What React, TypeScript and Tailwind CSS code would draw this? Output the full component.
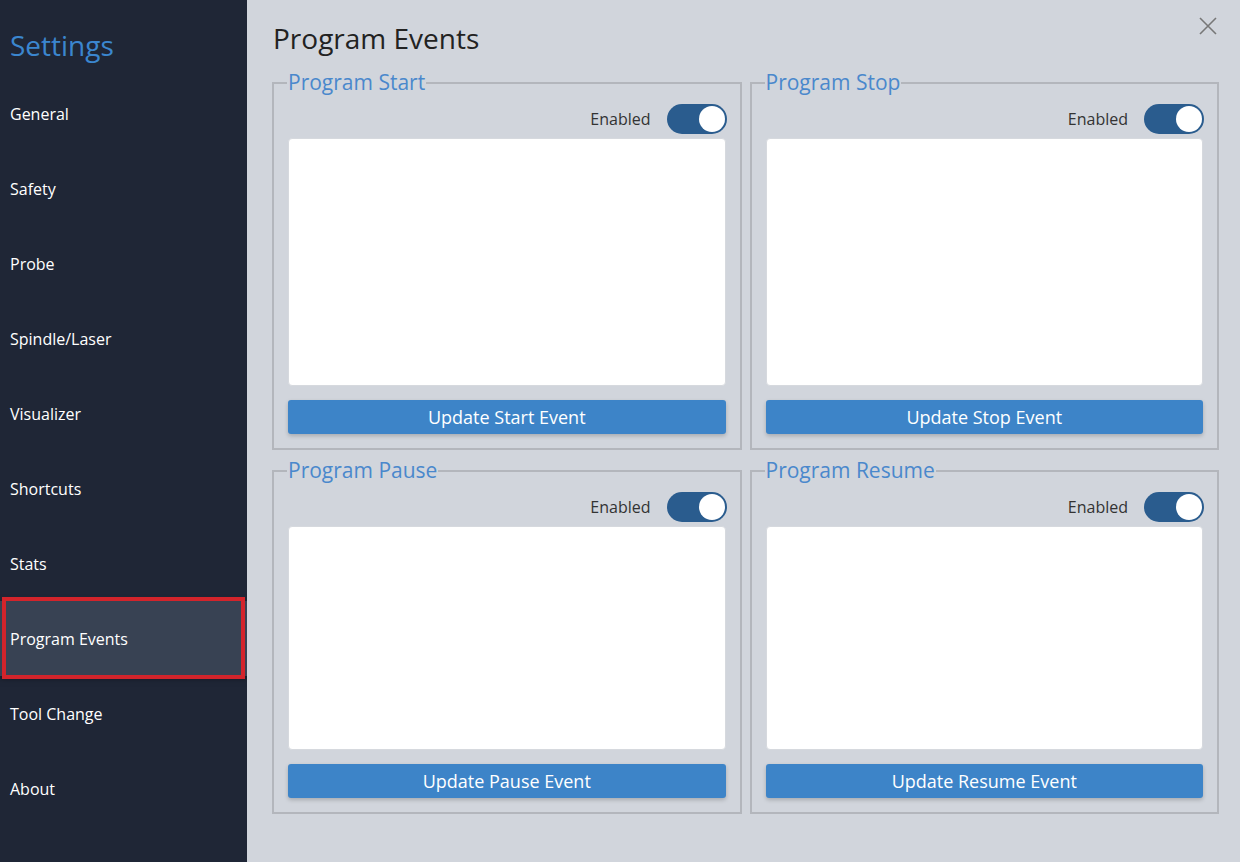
import { useState } from "react";

const navItems = [
  "General",
  "Safety",
  "Probe",
  "Spindle/Laser",
  "Visualizer",
  "Shortcuts",
  "Stats",
  "Program Events",
  "Tool Change",
  "About",
];

const events = [
  { title: "Program Start", button: "Update Start Event", area: "h-[248px]" },
  { title: "Program Stop", button: "Update Stop Event", area: "h-[248px]" },
  { title: "Program Pause", button: "Update Pause Event", area: "h-[224px]" },
  { title: "Program Resume", button: "Update Resume Event", area: "h-[224px]" },
];

function Toggle({ on, onClick }: { on: boolean; onClick: () => void }) {
  return (
    <button
      onClick={onClick}
      className={`w-[60px] h-[30px] rounded-full p-[2px] flex items-center ${
        on ? "bg-[#2a5c8e] justify-end" : "bg-[#9ca3af] justify-start"
      }`}
    >
      <span className="w-[26px] h-[26px] rounded-full bg-white block" />
    </button>
  );
}

function EventBox({ ev }: { ev: (typeof events)[number] }) {
  const [enabled, setEnabled] = useState(true);

  return (
    <fieldset className="border-2 border-[#b3b6bc] px-[14px] pb-[14px] pt-0 min-w-0">
      <legend className="text-[21px] leading-[27px] text-[#4a88cc] px-[1px] -ml-[1px]">
        {ev.title}
      </legend>

      <div className="flex items-center justify-end gap-[16px] mt-[8px] -mr-[1px]">
        <span className="text-[16px] text-[#333]">Enabled</span>
        <Toggle on={enabled} onClick={() => setEnabled(!enabled)} />
      </div>

      <textarea
        className={`mt-[4px] w-full ${ev.area} block bg-white rounded-[4px] border border-[#d6d9de] resize-none outline-none p-2`}
      />

      <button className="mt-[14px] w-full h-[34px] rounded-[3px] bg-[#3d84c8] text-white text-[18px] shadow-[0_2px_4px_rgba(0,0,0,0.2)]">
        {ev.button}
      </button>
    </fieldset>
  );
}

export default function App() {
  const [selected, setSelected] = useState("Program Events");

  return (
    <div className="w-[1240px] h-[862px] flex overflow-hidden font-['Open_Sans',sans-serif]">

      {/* Sidebar */}

      <div className="w-[247px] shrink-0 bg-[#1f2636] pt-[26px]">
        <h1 className="pl-[10px] text-[28px] leading-[38px] text-[#3b86cf]">
          Settings
        </h1>

        <div className="mt-[12px]">
          {navItems.map((item) => (
            <div
              key={item}
              onClick={() => setSelected(item)}
              className={`relative h-[75px] pl-[10px] flex items-center text-[16px] text-white cursor-pointer ${
                selected === item ? "bg-[#384253] shadow-[0_2px_6px_rgba(0,0,0,0.5)]" : ""
              }`}
            >
              {item}
              {selected === item && (
                <span className="absolute left-[2px] right-[2px] top-[-4px] bottom-[-3px] border-4 border-[#d3242b]" />
              )}
            </div>
          ))}
        </div>
      </div>

      {/* Content */}

      <div className="relative flex-1 bg-[#d1d5dc] pl-[25px] pr-[21px] pt-[19px]">
        <h2 className="text-[28px] leading-[38px] text-[#222] pl-[1px]">
          Program Events
        </h2>

        <button className="absolute right-[23px] top-[17px] text-[#777]">
          <svg width="18" height="18" viewBox="0 0 18 18" stroke="currentColor" strokeWidth="1.6">
            <path d="M1 1L17 17M17 1L1 17" />
          </svg>
        </button>

        <div className="mt-[12px] grid grid-cols-2 gap-x-[8px] gap-y-[7px]">
          {events.map((ev) => (
            <EventBox key={ev.title} ev={ev} />
          ))}
        </div>
      </div>

    </div>
  );
}
